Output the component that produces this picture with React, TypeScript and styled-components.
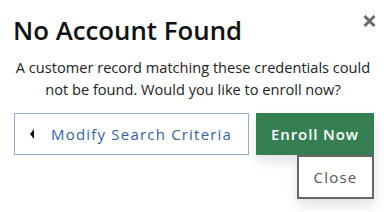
import React from "react";
import styled, { createGlobalStyle } from "styled-components";

const GlobalStyle = createGlobalStyle`
  html, body {
    margin: 0;
    padding: 0;
    background: #ffffff;
    font-family: "Open Sans", "DejaVu Sans", sans-serif;
  }
`;

const App: React.FC = () => {
  return (
    <>
      <GlobalStyle />
      <Modal>
        <Header>
          <Title>No Account Found</Title>
          <CloseIcon aria-label="close">
            <svg width="13" height="12" viewBox="0 0 13 12">
              <path d="M1.5 1 L11.5 11 M11.5 1 L1.5 11" stroke="#6b6b6b" strokeWidth="3" strokeLinecap="butt" />
            </svg>
          </CloseIcon>
        </Header>
        <Message>
          A customer record matching these credentials could not be found. Would you like to enroll now?
        </Message>
        <Actions>
          <OutlineButton>
            <Caret />
            Modify Search Criteria
          </OutlineButton>
          <PrimaryButton>Enroll Now</PrimaryButton>
          <SecondaryButton>Close</SecondaryButton>
        </Actions>
      </Modal>
    </>
  );
};

export default App;

const Modal = styled.div`
  width: 389px;
  box-sizing: border-box;
  padding: 14px 15px 12px 12px;
`;

const Header = styled.div`
  display: flex;
  justify-content: space-between;
  align-items: flex-start;
`;

const Title = styled.h2`
  margin: 0;
  padding-left: 1px;
  font-size: 25.8px;
  font-weight: 600;
  line-height: 33px;
  color: #111111;
`;

const CloseIcon = styled.button`
  border: 0;
  background: none;
  padding: 0;
  margin: 1px -2px 0 0;
  line-height: 0;
  cursor: pointer;
`;

const Message = styled.p`
  margin: 9px 0 0;
  font-size: 14.6px;
  line-height: 22px;
  text-align: center;
  color: #222222;
`;

const Actions = styled.div`
  display: flex;
  flex-wrap: wrap;
  justify-content: flex-end;
  align-items: flex-start;
  column-gap: 7px;
  margin-top: 13px;
`;

const ButtonBase = styled.button`
  box-sizing: border-box;
  height: 42px;
  font-family: "Open Sans", "DejaVu Sans", sans-serif;
  font-size: 15px;
  letter-spacing: 1.2px;
  cursor: pointer;
`;

const OutlineButton = styled(ButtonBase)`
  width: 235px;
  display: flex;
  align-items: center;
  gap: 17px;
  padding: 0 0 0 15px;
  border: 1px solid #8fb0d4;
  background: #ffffff;
  color: #2f63a3;
`;

const Caret = styled.span`
  width: 0;
  height: 0;
  border-top: 5px solid transparent;
  border-bottom: 5px solid transparent;
  border-right: 4px solid #111111;
`;

const PrimaryButton = styled(ButtonBase)`
  width: 118px;
  border: 0;
  background: #367f53;
  color: #ffffff;
  font-weight: 600;
  letter-spacing: 0.9px;
  box-shadow: 0 6px 12px rgba(0, 0, 0, 0.12);
`;

const SecondaryButton = styled(ButtonBase)`
  width: 77px;
  height: 44px;
  border: 2px solid #666666;
  background: #ffffff;
  color: #555555;
  box-shadow: 0 6px 12px rgba(0, 0, 0, 0.12);
`;
